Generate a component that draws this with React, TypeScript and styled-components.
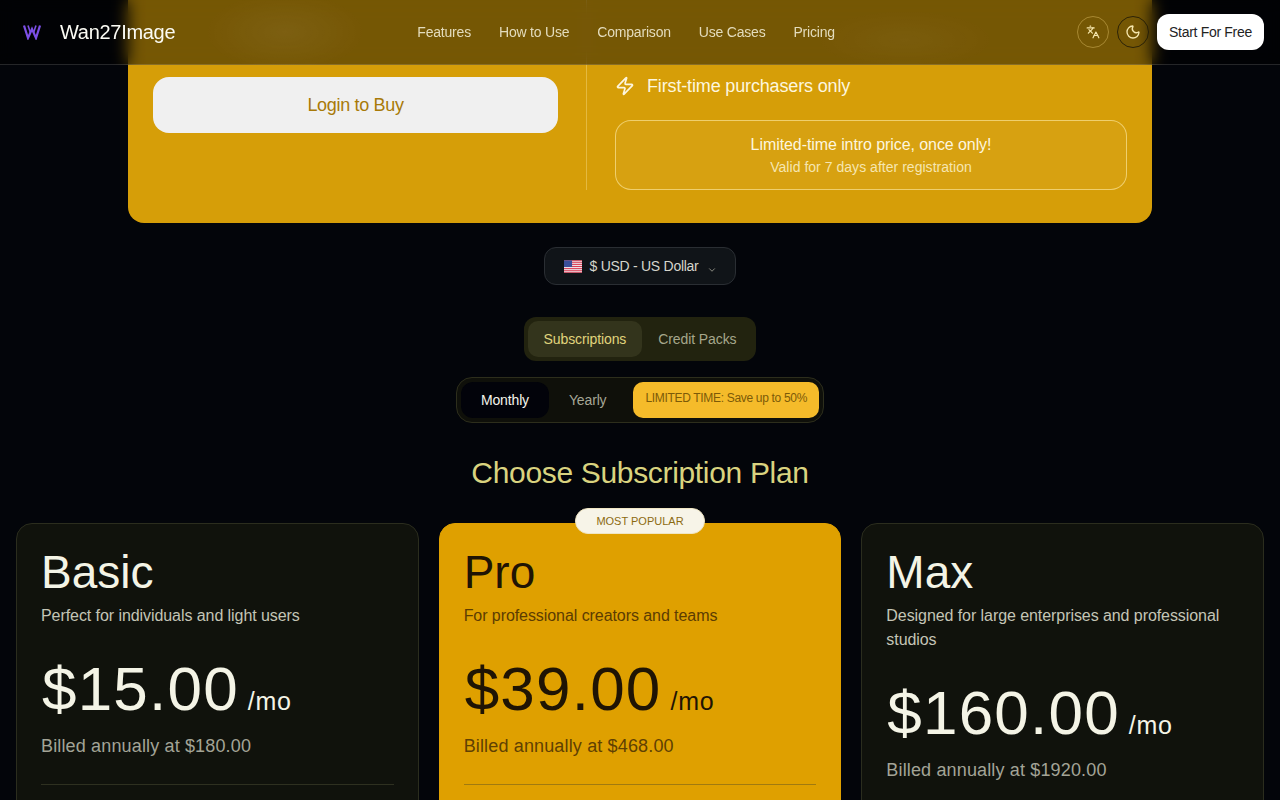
import React from 'react';
import styled, { createGlobalStyle } from 'styled-components';
import { ChevronDown, Languages, Moon, Zap } from 'lucide-react';

const GlobalStyle = createGlobalStyle`
  html, body {
    margin: 0;
    height: 100%;
    overflow: hidden;
    background: #03050a;
  }
  * {
    box-sizing: border-box;
  }
  body {
    font-family: "Liberation Sans", Arial, sans-serif;
    color: #f4f4e8;
  }
`;

const Page = styled.div`
  position: relative;
  height: 800px;
  overflow: hidden;
`;

const Header = styled.header`
  position: absolute;
  top: 0;
  left: 0;
  right: 0;
  z-index: 10;
  height: 65px;
  padding: 0 16px 0 23px;
  display: flex;
  align-items: center;
  justify-content: space-between;
  border-bottom: 1px solid rgba(255, 255, 255, 0.14);
  background:
    radial-gradient(ellipse 80px 40px at 285px 32px, rgba(255, 255, 255, 0.05), transparent),
    radial-gradient(ellipse 90px 30px at 905px 40px, rgba(255, 255, 255, 0.03), transparent),
    rgba(0, 0, 0, 0.45);
  backdrop-filter: blur(8px);
`;

const Brand = styled.div`
  display: flex;
  align-items: center;
  gap: 19px;
  font-size: 20px;
  letter-spacing: -0.3px;
  color: #fbfbf4;
`;

const Nav = styled.nav`
  display: flex;
  gap: 28px;
`;

const NavLink = styled.a`
  font-size: 14px;
  letter-spacing: -0.2px;
  color: #e3dcbd;
`;

const HeaderActions = styled.div`
  display: flex;
  align-items: center;
  gap: 8px;
`;

const RoundButton = styled.button<{ $dark?: boolean }>`
  width: 32px;
  height: 32px;
  padding: 0;
  display: flex;
  align-items: center;
  justify-content: center;
  border-radius: 50%;
  background: transparent;
  color: #f6e7ae;
  border: 1px solid ${(p) => (p.$dark ? 'rgba(30, 26, 8, 0.85)' : 'rgba(240, 210, 120, 0.4)')};
`;

const StartButton = styled.button`
  width: 107px;
  height: 36px;
  padding: 0;
  border: 0;
  border-radius: 12px;
  background: #fff;
  color: #23231f;
  font: inherit;
  font-size: 14px;
  letter-spacing: -0.3px;
`;

const Hero = styled.section`
  margin: 0 128px;
  height: 223px;
  padding: 0 25px;
  display: grid;
  grid-template-columns: 405px 1fr;
  background: #d69e08;
  border-radius: 0 0 16px 16px;
`;

const HeroLeft = styled.div`
  padding-top: 77px;
`;

const LoginButton = styled.button`
  width: 100%;
  height: 56px;
  border: 0;
  border-radius: 16px;
  background: #f0f0f0;
  color: #a87a08;
  font: inherit;
  font-size: 18px;
  letter-spacing: -0.33px;
`;

const HeroRight = styled.div`
  height: 190px;
  margin-left: 28px;
  padding: 73px 0 0 28px;
  border-left: 1px solid rgba(255, 235, 170, 0.35);
`;

const Perk = styled.div`
  height: 26px;
  display: flex;
  align-items: center;
  gap: 12px;
  font-size: 18px;
  letter-spacing: -0.15px;
  color: #fdf6df;
`;

const IntroBox = styled.div`
  height: 70px;
  margin-top: 21px;
  display: flex;
  flex-direction: column;
  align-items: center;
  justify-content: center;
  gap: 1px;
  border: 1px solid rgba(255, 236, 170, 0.6);
  border-radius: 16px;
  background: rgba(255, 255, 255, 0.04);
`;

const IntroTitle = styled.div`
  font-size: 16px;
  line-height: 22px;
  letter-spacing: -0.08px;
  color: #fdf6df;
`;

const IntroNote = styled.div`
  font-size: 14px;
  line-height: 20px;
  letter-spacing: 0.03px;
  color: #f6e6b0;
`;

const Controls = styled.div`
  display: flex;
  flex-direction: column;
  align-items: center;
`;

const CurrencySelect = styled.div`
  width: 192px;
  height: 38px;
  margin-top: 24px;
  display: flex;
  align-items: center;
  justify-content: center;
  gap: 8px;
  border: 1px solid #2a2e33;
  border-radius: 12px;
  background: #101418;
  font-size: 14px;
  letter-spacing: -0.27px;
  color: #d6d6cc;
`;

const Caret = styled(ChevronDown)`
  margin-top: 8px;
  color: #a2a296;
`;

const Tabs = styled.div`
  height: 44px;
  margin-top: 32px;
  padding: 4px;
  display: flex;
  background: #22230f;
  border-radius: 12px;
`;

const Tab = styled.div<{ $active?: boolean }>`
  height: 36px;
  padding: 0 16px;
  display: flex;
  align-items: center;
  border-radius: 10px;
  font-size: 14px;
  letter-spacing: -0.1px;
  background: ${(p) => (p.$active ? '#33341c' : 'transparent')};
  color: ${(p) => (p.$active ? '#e0d47c' : '#a6a78c')};
`;

const PeriodToggle = styled.div`
  height: 46px;
  margin-top: 16px;
  padding: 4px;
  display: flex;
  align-items: center;
  border: 1px solid #2d2e1c;
  border-radius: 16px;
  background: #0f100a;
`;

const PeriodOption = styled.div<{ $active?: boolean }>`
  height: 36px;
  padding: 0 20px;
  display: flex;
  align-items: center;
  border-radius: 12px;
  font-size: 14px;
  letter-spacing: -0.15px;
  background: ${(p) => (p.$active ? '#02030a' : 'transparent')};
  color: ${(p) => (p.$active ? '#f4f4ea' : '#a6a796')};
`;

const SaleBadge = styled.div`
  height: 36px;
  margin-left: 7px;
  padding: 0 12px 4px;
  display: flex;
  align-items: center;
  border-radius: 10px;
  background: #f5bb2a;
  color: #7c5a08;
  font-size: 12px;
  letter-spacing: -0.32px;
`;

const Heading = styled.h2`
  margin: 32px 0 0;
  font-size: 30px;
  line-height: 36px;
  font-weight: 400;
  letter-spacing: -0.33px;
  text-align: center;
  color: #d9d37f;
`;

const Plans = styled.div`
  margin-top: 32px;
  padding: 0 16px;
  display: grid;
  grid-template-columns: repeat(3, 1fr);
  gap: 20px;
`;

const Card = styled.article<{ $featured?: boolean }>`
  position: relative;
  height: 420px;
  padding: 24px;
  border-radius: 16px;
  border: 1px solid ${(p) => (p.$featured ? '#dfa000' : '#2b2d1e')};
  background: ${(p) => (p.$featured ? '#dfa000' : '#10120c')};
`;

const PopularBadge = styled.div`
  position: absolute;
  top: -16px;
  left: 50%;
  transform: translateX(-50%);
  width: 130px;
  height: 26px;
  display: flex;
  align-items: center;
  justify-content: center;
  border-radius: 13px;
  border: 1px solid #f0e6c4;
  background: #f7f4e8;
  color: #8c6a10;
  font-size: 11px;
`;

const PlanName = styled.h3<{ $featured?: boolean }>`
  margin: 0;
  font-size: 46px;
  line-height: 48px;
  font-weight: 400;
  color: ${(p) => (p.$featured ? '#1f1404' : '#f4f4e6')};
`;

const PlanDescription = styled.p<{ $featured?: boolean }>`
  margin: 8px 0 0;
  font-size: 16px;
  line-height: 24px;
  letter-spacing: -0.07px;
  color: ${(p) => (p.$featured ? '#5c3c02' : '#c4c5b6')};
`;

const PriceRow = styled.div<{ $featured?: boolean }>`
  margin-top: 31px;
  padding-left: 1px;
  display: flex;
  align-items: baseline;
  gap: 9px;
  color: ${(p) => (p.$featured ? '#1f1404' : '#f4f4e6')};
`;

const Price = styled.span`
  font-size: 62px;
  line-height: 60px;
  letter-spacing: 1.2px;
`;

const PriceUnit = styled.span`
  font-size: 25px;
  letter-spacing: 0.7px;
`;

const BilledNote = styled.p<{ $featured?: boolean }>`
  margin: 13px 0 0;
  font-size: 18px;
  line-height: 28px;
  letter-spacing: 0.15px;
  color: ${(p) => (p.$featured ? '#5f4003' : '#a3a497')};
`;

const Divider = styled.hr<{ $featured?: boolean }>`
  margin: 24px 0 0;
  border: 0;
  border-top: 1px solid ${(p) => (p.$featured ? '#a07a10' : '#2e3020')};
`;

const FlagIcon = () => (
  <svg width="18" height="13" viewBox="0 0 19 13" aria-hidden="true">
    <rect width="19" height="13" fill="#eef0f4" />
    {[0, 2, 4, 6, 8, 10, 12].map((y) => (
      <rect key={y} y={y} width="19" height="1" fill="#d8324a" />
    ))}
    <rect width="8.5" height="7" fill="#3b4f9a" />
  </svg>
);

const LogoIcon = () => (
  <svg width="18" height="16" viewBox="0 0 18 16" fill="none" stroke="#7c4fe6" strokeWidth="2.2" aria-hidden="true">
    <path d="M1 1.5 5 14 9 5 13 14 17 1.5" />
    <path d="M5 1.5 7.4 8.5M13 1.5 10.6 8.5" strokeWidth="1.6" />
  </svg>
);

const navItems = ['Features', 'How to Use', 'Comparison', 'Use Cases', 'Pricing'];

const plans = [
  {
    name: 'Basic',
    description: 'Perfect for individuals and light users',
    price: '$15.00',
    billed: 'Billed annually at $180.00',
  },
  {
    name: 'Pro',
    description: 'For professional creators and teams',
    price: '$39.00',
    billed: 'Billed annually at $468.00',
    featured: true,
  },
  {
    name: 'Max',
    description: 'Designed for large enterprises and professional studios',
    price: '$160.00',
    billed: 'Billed annually at $1920.00',
  },
];

export default function App() {
  return (
    <Page>
      <GlobalStyle />
      <Header>
        <Brand>
          <LogoIcon />
          Wan27Image
        </Brand>
        <Nav>
          {navItems.map((item) => (
            <NavLink key={item}>{item}</NavLink>
          ))}
        </Nav>
        <HeaderActions>
          <RoundButton>
            <Languages size={14} />
          </RoundButton>
          <RoundButton $dark>
            <Moon size={16} />
          </RoundButton>
          <StartButton>Start For Free</StartButton>
        </HeaderActions>
      </Header>

      <Hero>
        <HeroLeft>
          <LoginButton>Login to Buy</LoginButton>
        </HeroLeft>
        <HeroRight>
          <Perk>
            <Zap size={20} />
            First-time purchasers only
          </Perk>
          <IntroBox>
            <IntroTitle>Limited-time intro price, once only!</IntroTitle>
            <IntroNote>Valid for 7 days after registration</IntroNote>
          </IntroBox>
        </HeroRight>
      </Hero>

      <Controls>
        <CurrencySelect>
          <FlagIcon />
          $ USD - US Dollar
          <Caret size={10} />
        </CurrencySelect>
        <Tabs>
          <Tab $active>Subscriptions</Tab>
          <Tab>Credit Packs</Tab>
        </Tabs>
        <PeriodToggle>
          <PeriodOption $active>Monthly</PeriodOption>
          <PeriodOption>Yearly</PeriodOption>
          <SaleBadge>LIMITED TIME: Save up to 50%</SaleBadge>
        </PeriodToggle>
      </Controls>

      <Heading>Choose Subscription Plan</Heading>

      <Plans>
        {plans.map((plan) => (
          <Card key={plan.name} $featured={plan.featured}>
            {plan.featured && <PopularBadge>MOST POPULAR</PopularBadge>}
            <PlanName $featured={plan.featured}>{plan.name}</PlanName>
            <PlanDescription $featured={plan.featured}>{plan.description}</PlanDescription>
            <PriceRow $featured={plan.featured}>
              <Price>{plan.price}</Price>
              <PriceUnit>/mo</PriceUnit>
            </PriceRow>
            <BilledNote $featured={plan.featured}>{plan.billed}</BilledNote>
            <Divider $featured={plan.featured} />
          </Card>
        ))}
      </Plans>
    </Page>
  );
}
